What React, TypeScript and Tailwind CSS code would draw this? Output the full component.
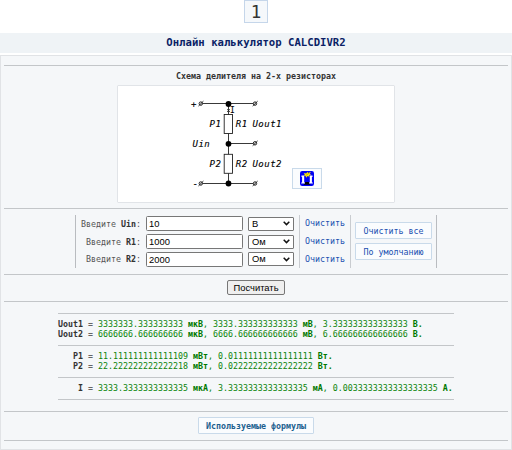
import React from 'react';

function Rule({ className = '' }: { className?: string }) {
  return <div className={`h-px shrink-0 bg-[#c3c6c9] ${className}`} />;
}

function Terminal({ x, y }: { x: number; y: number }) {
  return (
    <g strokeWidth="1">
      <circle cx={x} cy={y} r="1.7" fill="#fff" />
      <path d={`M${x - 2.3} ${y + 2.4}L${x + 2.6} ${y - 2.4}`} />
    </g>
  );
}

function Circuit() {
  return (
    <svg viewBox="117 85 278 118" className="h-[118px] w-[278px]" fill="none" stroke="#222" strokeWidth="0.9">
      <path d="M202 103.5H254M228.5 143.5H254M202 183.5H254M228.5 104V183.5" />
      <path d="M227 109.2l3 2.8m0-2.8l-3 2.8" strokeWidth="0.8" />
      <rect x="224.2" y="114.5" width="8.3" height="19" fill="#fff" />
      <rect x="224.2" y="154.3" width="8.3" height="19" fill="#fff" />
      <Terminal x={200.8} y={103.6} />
      <Terminal x={200.8} y={183.5} />
      <Terminal x={255} y={103.6} />
      <Terminal x={255} y={143.3} />
      <Terminal x={255} y={183.5} />
      <g fill="#000" stroke="none">
        <circle cx="228.5" cy="104" r="2.9" />
        <circle cx="228.5" cy="143.8" r="2.9" />
        <circle cx="228.5" cy="183.5" r="2.9" />
      </g>
      <g
        fill="#000"
        stroke="#000"
        strokeWidth="0.12"
        fontFamily="'DejaVu Sans Mono', monospace"
        fontSize="9"
        letterSpacing="0.5"
        fontStyle="italic"
      >
        <text x="209.5" y="127.3">P1</text>
        <text x="235.8" y="127.3">R1</text>
        <text x="252.4" y="127.3">Uout1</text>
        <text x="192.5" y="147">Uin</text>
        <text x="209.5" y="167">P2</text>
        <text x="235.8" y="167">R2</text>
        <text x="252.4" y="167">Uout2</text>
        <text x="191" y="107" fontStyle="normal">+</text>
        <text x="192.5" y="186.5" fontStyle="normal">-</text>
        <text x="230" y="113" fontStyle="normal" fontSize="8">I</text>
      </g>
    </svg>
  );
}

function SparkIcon() {
  return (
    <svg viewBox="0 0 14 15" className="h-[15px] w-[14px]">
      <rect width="14" height="15" rx="2.2" fill="#0000f4" />
      <path d="M3.5 13.8L5.3 11H8.7L10.5 13.8Z" fill="#000" />
      <path d="M1.5 4.5h2.7v7h.8v1H1.2v-1h.9V6h-.6zM12.5 4.5H9.8v7H9v1h3.8v-1h-.9V6h.6z" fill="#fff" />
      <path d="M3.6 4.8l1.2-1L3.8 2l2.4.4L7.4 1l.9 1L11 .8 9.7 2.7l1.6.9-2.1.5.3 1.6L7.5 4.9 6.2 6.7l-.7-1.9z" fill="#ffed00" />
      <path d="M5.8 4.5L9.6 1.8" stroke="#77701c" strokeWidth=".5" />
    </svg>
  );
}

function FormRow({ name, value, unit }: { name: string; value: string; unit: string }) {
  return (
    <div className="flex h-[17.8px] items-center justify-end">
      <label className="mr-[5px] text-[#555]">
        Введите <b className="text-[#333]">{name}</b>:
      </label>
      <input
        defaultValue={value}
        className="h-[15px] w-[97px] rounded-[1.5px] border border-[#777] bg-white px-[2px] font-['Liberation_Sans',sans-serif] text-[9.4px] text-black outline-none"
      />
      <button className="mr-[5px] ml-[5px] flex h-[14px] w-[46px] items-center justify-between rounded-[1px] border border-[#777] bg-white pr-[3px] pl-[3px] font-['Liberation_Sans',sans-serif] text-[9.4px] text-black">
        <span>{unit}</span>
        <svg viewBox="0 0 7 5" className="h-[5px] w-[7px]" fill="none" stroke="#111" strokeWidth="1.5">
          <path d="M.7.8L3.5 3.6 6.3.8" />
        </svg>
      </button>
    </div>
  );
}

function ActionButton({ children }: { children: React.ReactNode }) {
  return (
    <button className="flex h-[17px] w-[77px] items-center justify-center rounded-[1px] border border-[#c9daea] bg-[#fafcfe] text-[#2050b0]">
      {children}
    </button>
  );
}

function Result({ name, items }: { name: string; items: [string, string][] }) {
  return (
    <div className="h-[10px] whitespace-pre leading-[10px] text-[#0a840a]">
      <b className="text-[#333]">{name.padStart(5)}</b>
      <span className="text-[#444]"> = </span>
      {items.map(([value, unit], i) => (
        <React.Fragment key={unit}>
          {value} <b className="text-[#007800]">{unit}</b>
          {i < items.length - 1 ? ', ' : <b>.</b>}
        </React.Fragment>
      ))}
    </div>
  );
}

export default function App() {
  return (
    <div className="flex h-[450px] w-[512px] flex-col overflow-hidden bg-white font-['DejaVu_Sans_Mono',monospace] text-[8.31px] leading-[10px]">
      <div className="ml-[244px] flex h-[23px] w-[24px] shrink-0 items-center justify-center border border-[#c5d6ea] bg-[#f5f8fb] text-[17.5px] text-[#333]">
        1
      </div>
      <h1 className="mt-[10px] flex h-5 shrink-0 items-center justify-center bg-[#eff3f6] text-[10.65px] font-bold text-[#0b1f66]">
        Онлайн калькулятор CALCDIVR2
      </h1>
      <main className="mt-[2px] flex h-[395px] shrink-0 flex-col border border-[#e1e3e6] bg-[#f5f7f9] px-[3px]">
        <Rule className="mt-[9px]" />
        <h2 className="mt-[5px] h-[10px] text-center font-bold text-[#333]">Схема делителя на 2-х резисторах</h2>
        <div className="relative mt-[4px] ml-[113px] h-[118px] w-[278px] shrink-0 rounded-[1px] bg-white outline outline-1 -outline-offset-1 outline-[#e1e4e8]">
          <Circuit />
          <button className="absolute top-[83px] left-[175px] flex h-[21px] w-[30px] items-center justify-center border border-[#c9daea] bg-[#fafcfe]">
            <SparkIcon />
          </button>
        </div>
        <Rule className="mt-[5px]" />
        <section className="mt-[6px] ml-[71px] flex h-[53px] w-[362px] shrink-0 border-x border-[#b9bcc0]">
          <div className="w-[223px]">
            <FormRow name="Uin" value="10" unit="В" />
            <FormRow name="R1" value="1000" unit="Ом" />
            <FormRow name="R2" value="2000" unit="Ом" />
          </div>
          <div className="w-[52px] border-x border-[#c9ccd0] text-center text-[#2050b0]">
            <div className="h-[17.8px] leading-[17px]">Очистить</div>
            <div className="h-[17.8px] leading-[17px]">Очистить</div>
            <div className="h-[17.8px] leading-[17px]">Очистить</div>
          </div>
          <div className="flex flex-1 flex-col items-center gap-[4px] pt-[7px]">
            <ActionButton>Очистить все</ActionButton>
            <ActionButton>По умолчанию</ActionButton>
          </div>
        </section>
        <Rule className="mt-[6px]" />
        <button className="mt-[5px] ml-[223px] flex h-[15px] w-[58px] shrink-0 items-center justify-center rounded-[2px] border border-[#777] bg-[#efefef] font-['Liberation_Sans',sans-serif] text-[9.4px] text-black">
          Посчитать
        </button>
        <Rule className="mt-[6px]" />
        <section className="mt-[11px] ml-[54px] w-[396px] shrink-0">
          <Rule />
          <div className="pt-[5px] pb-[6px]">
            <Result name="Uout1" items={[['3333333.333333333', 'мкВ'], ['3333.333333333333', 'мВ'], ['3.333333333333333', 'В']]} />
            <Result name="Uout2" items={[['6666666.666666666', 'мкВ'], ['6666.666666666666', 'мВ'], ['6.666666666666666', 'В']]} />
          </div>
          <Rule />
          <div className="pt-[5px] pb-[6px]">
            <Result name="P1" items={[['11.111111111111109', 'мВт'], ['0.01111111111111111', 'Вт']]} />
            <Result name="P2" items={[['22.222222222222218', 'мВт'], ['0.02222222222222222', 'Вт']]} />
          </div>
          <Rule />
          <div className="pt-[5px] pb-[6px]">
            <Result name="I" items={[['3333.3333333333335', 'мкА'], ['3.3333333333333335', 'мА'], ['0.0033333333333333335', 'А']]} />
          </div>
          <Rule />
        </section>
        <Rule className="mt-[11px]" />
        <button className="mt-[5px] ml-[194px] flex h-[17px] w-[116px] shrink-0 items-center justify-center rounded-[1px] border border-[#c9daea] bg-[#fafcfe] font-bold text-[#1c608f]">
          Используемые формулы
        </button>
        <Rule className="mt-[6px]" />
      </main>
    </div>
  );
}
